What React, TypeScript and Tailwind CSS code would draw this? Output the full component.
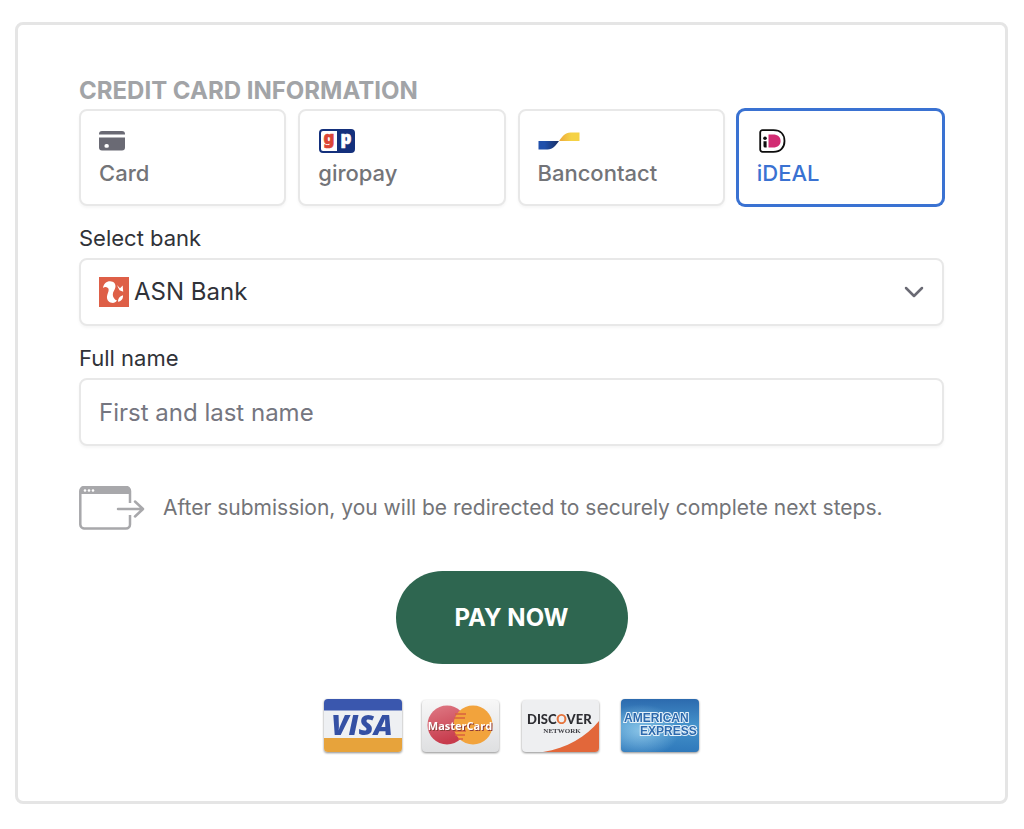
import { useState } from 'react';
import type { ReactNode } from 'react';
import { clsx } from 'clsx';

function CardIcon() {
  return (
    <svg viewBox="0 0 26 20" className="h-5 w-[26px]" fill="#6a6a74" aria-hidden="true">
      <path d="M3 0H23A3 3 0 0 1 26 3V3.500H0V3A3 3 0 0 1 3 0Z" />
      <path
        fillRule="evenodd"
        d="M0 6.500H26V16.500A3 3 0 0 1 23 19.500H3A3 3 0 0 1 0 16.500ZM7.300 13A1.900 1.900 0 0 0 7.300 16.800H8A1.900 1.900 0 0 0 8 13Z"
      />
    </svg>
  );
}

function GiropayIcon() {
  return (
    <svg viewBox="0 0 36 24" className="ml-px h-6 w-9 overflow-visible" aria-hidden="true">
      <rect width="36" height="24" rx="4" fill="#14307c" />
      <path d="M4 2H18V22H4A2 2 0 0 1 2 20V4A2 2 0 0 1 4 2Z" fill="#fff" />
      <g fontFamily="Noto Sans, sans-serif" fontWeight="900" fontSize="17" textAnchor="middle">
        <text x="10" y="15" fill="#dc4535" stroke="#dc4535" strokeWidth="0.600">
          g
        </text>
        <text x="27" y="15" fill="#fff" stroke="#fff" strokeWidth="0.600">
          p
        </text>
      </g>
    </svg>
  );
}

function BancontactIcon() {
  return (
    <svg viewBox="0 0 42 18" className="h-[18px] w-[42px]" aria-hidden="true">
      <defs>
        <linearGradient id="bc-blue" x1="0" x2="1">
          <stop offset="0.3" stopColor="#2050ab" />
          <stop offset="1" stopColor="#1a2f63" />
        </linearGradient>
        <linearGradient id="bc-yellow" x1="0" x2="1">
          <stop offset="0" stopColor="#eda93b" />
          <stop offset="0.6" stopColor="#f5d245" />
        </linearGradient>
      </defs>
      <path d="M0.500 9H21C17.500 13.500 15 17.500 9.500 17.500H0.500Z" fill="url(#bc-blue)" />
      <path d="M21 9C24.500 4.500 27 0.500 32.500 0.500H41.500V9Z" fill="url(#bc-yellow)" />
    </svg>
  );
}

function IdealIcon() {
  return (
    <svg viewBox="0 0 28 24" className="ml-0.5 h-6 w-7" aria-hidden="true">
      <path
        d="M3.500 1.200H14.500C21.500 1.200 25.500 5.500 25.500 12S21.500 22.800 14.500 22.800H3.500A2.300 2.300 0 0 1 1.200 20.500V3.500A2.300 2.300 0 0 1 3.500 1.200Z"
        fill="#fff"
        stroke="#0d0d0d"
        strokeWidth="1.800"
      />
      <path d="M9.500 5.500H14C18.800 5.500 21.600 8 21.600 12S18.800 18.500 14 18.500H9.500Z" fill="#d22c73" />
      <circle cx="6" cy="9.300" r="1.800" fill="#0d0d0d" />
      <path d="M4.500 12.300H7.600V18.500H6A1.500 1.500 0 0 1 4.500 17Z" fill="#0d0d0d" />
    </svg>
  );
}

function AsnLogo() {
  return (
    <svg viewBox="0 0 30 30" className="h-[30px] w-[30px]" aria-hidden="true">
      <rect width="30" height="30" fill="#de5f47" />
      <path
        d="M4 11C4.500 6.800 7.500 4.200 11 4.200C15 4.200 17 7 16.400 10.300C15.900 13 13.600 15 13.800 18C14 20.600 15.600 22.500 18 23.600C16.800 25.400 14.800 26.200 12.600 25.800C9.300 25.200 7.600 22.600 8 19.300C8.300 16.500 10 14.500 9.600 12.200C9.200 10 6 9 4 11Z"
        fill="#fff"
      />
      <path d="M18 8L21 11.200L23.700 8.600L24.200 14.800L20.500 13.200Z" fill="#fff" />
      <path d="M24 18.200C24.300 21.500 22.500 24.200 19 24.800C18.700 21.800 20.500 19.200 24 18.200Z" fill="#fff" />
    </svg>
  );
}

function RedirectIcon() {
  return (
    <svg viewBox="0 0 66 44" className="h-11 w-[66px] shrink-0" fill="none" aria-hidden="true">
      <path d="M51 17V5A4 4 0 0 0 47 1H5A4 4 0 0 0 1.300 5V38.500A4 4 0 0 0 5 42.500H47A4 4 0 0 0 51 38.500V29" stroke="#a8a8ab" strokeWidth="2.500" />
      <path d="M1 8V5A4 4 0 0 1 5 1H47A4 4 0 0 1 51 5V8Z" fill="#a8a8ab" />
      <g fill="#fff">
        <circle cx="6" cy="4.500" r="1.300" />
        <circle cx="10" cy="4.500" r="1.300" />
        <circle cx="14" cy="4.500" r="1.300" />
      </g>
      <path d="M39 23H63M56 15.500L64 23L56 30.500" stroke="#a8a8ab" strokeWidth="2.500" strokeLinecap="round" strokeLinejoin="round" />
    </svg>
  );
}

function CardBadge({ label, children }: { label: string; children: ReactNode }) {
  return (
    <svg viewBox="0 0 80 54" className="h-[54px] w-20 drop-shadow-[0_1px_1px_rgba(0,0,0,0.45)]" role="img" aria-label={label}>
      {children}
    </svg>
  );
}

function VisaBadge() {
  return (
    <CardBadge label="Visa">
      <rect x="1" width="78" height="53" rx="4" fill="#eef0f3" />
      <path d="M1 11.500V4A4 4 0 0 1 5 0H75A4 4 0 0 1 79 4V11.500Z" fill="#3a57ae" />
      <path d="M1 39H79V49A4 4 0 0 1 75 53H5A4 4 0 0 1 1 49Z" fill="#e7a33b" />
      <text x="39" y="36" textAnchor="middle" fontFamily="Open Sans, sans-serif" fontStyle="italic" fontWeight="800" fontSize="28" fill="#3450a4">
        VISA
      </text>
    </CardBadge>
  );
}

function MastercardBadge() {
  return (
    <CardBadge label="MasterCard">
      <defs>
        <linearGradient id="mc-base" x1="0" y1="0" x2="0" y2="1">
          <stop offset="0" stopColor="#f7f7f7" />
          <stop offset="1" stopColor="#dedfe1" />
        </linearGradient>
        <linearGradient id="mc-red" x1="0" y1="0" x2="0.3" y2="1">
          <stop offset="0" stopColor="#df7a85" />
          <stop offset="1" stopColor="#c73b4c" />
        </linearGradient>
      </defs>
      <rect x="0" y="1" width="77" height="52" rx="4" fill="url(#mc-base)" />
      <circle cx="25" cy="26" r="19.500" fill="url(#mc-red)" />
      <circle cx="51" cy="26" r="19.500" fill="#f2a33c" />
      <path d="M33 15H44M32 19H43M32 32H44M33 36H43M36 40H41" stroke="#d9623f" strokeWidth="1.500" />
      <text x="39" y="32" textAnchor="middle" fontFamily="Open Sans, sans-serif" fontWeight="700" fontSize="11" fill="#8d3a38">
        MasterCard
      </text>
      <text x="38" y="31" textAnchor="middle" fontFamily="Open Sans, sans-serif" fontWeight="700" fontSize="11" fill="#fff">
        MasterCard
      </text>
    </CardBadge>
  );
}

function DiscoverBadge() {
  return (
    <CardBadge label="Discover Network">
      <rect x="1" y="1" width="77" height="52" rx="4" fill="#eeeff1" />
      <path d="M22 53C46 49 65 38 78 22V49A4 4 0 0 1 74 53Z" fill="#e2673a" />
      <text x="6" y="25" fontFamily="Lato, sans-serif" fontWeight="900" fontSize="13" fill="#2e2e33">
        DISC
        <tspan fill="#e6733c">O</tspan>
        VER
      </text>
      <text x="41" y="34" textAnchor="middle" fontFamily="Liberation Serif, serif" fontWeight="700" fontSize="7" fill="#3c3c42">
        NETWORK
      </text>
    </CardBadge>
  );
}

function AmexBadge() {
  return (
    <CardBadge label="American Express">
      <defs>
        <linearGradient id="amex" x1="0" y1="0" x2="0" y2="1">
          <stop offset="0" stopColor="#2c6aae" />
          <stop offset="0.5" stopColor="#4593cb" />
          <stop offset="1" stopColor="#2f79bb" />
        </linearGradient>
        <radialGradient id="amex-glow" cx="0.25" cy="0.6" r="0.5">
          <stop offset="0" stopColor="#a5d8f3" stopOpacity="0.7" />
          <stop offset="1" stopColor="#a5d8f3" stopOpacity="0" />
        </radialGradient>
      </defs>
      <rect x="1" y="0" width="78" height="53" rx="4" fill="url(#amex)" />
      <rect x="1" y="0" width="78" height="53" rx="4" fill="url(#amex-glow)" />
      <g fontFamily="Liberation Sans, sans-serif" fontWeight="700" fontSize="12" fill="#2c69ad" stroke="#e4f1fa" strokeWidth="2" paintOrder="stroke">
        <text x="4" y="23">AMERICAN</text>
        <text x="20" y="36">EXPRESS</text>
      </g>
    </CardBadge>
  );
}

const methods = [
  { id: 'card', label: 'Card', icon: CardIcon },
  { id: 'giropay', label: 'giropay', icon: GiropayIcon },
  { id: 'bancontact', label: 'Bancontact', icon: BancontactIcon },
  { id: 'ideal', label: 'iDEAL', icon: IdealIcon },
];

const labelClass = 'mt-4 mb-1 block text-[22px] leading-8';

const fieldClass =
  'h-[68px] w-full rounded-lg border-2 border-[#e8e8e8] bg-white text-2xl shadow-[0_2px_3px_rgba(0,0,0,0.04)] outline-none focus:border-[#3a72d2]';

export default function App() {
  const [method, setMethod] = useState('ideal');
  const [bank, setBank] = useState('ASN Bank');
  const [name, setName] = useState('');

  return (
    <main className="bg-white pt-[22px] pr-4 pb-6 pl-[15px] font-[Inter,sans-serif] text-[#303238]">
      <form
        className="rounded-lg border-3 border-[#e5e5e5] px-[61px] pt-12 pb-12"
        onSubmit={(e) => e.preventDefault()}
      >
        <h1 className="text-2xl leading-9 font-bold text-[#a2a4a7]">CREDIT CARD INFORMATION</h1>

        {/* Payment methods */}
        <div className="grid grid-cols-4 gap-3">
          {methods.map(({ id, label, icon: Icon }) => (
            <button
              key={id}
              type="button"
              aria-pressed={method === id}
              onClick={() => setMethod(id)}
              className={clsx(
                'flex h-[97px] flex-col items-start rounded-lg border-2 bg-white px-[18px] pt-[18px] text-[22px] font-medium',
                method === id
                  ? 'border-[#3a72d2] text-[#3a72d2] ring-1 ring-[#3a72d2]'
                  : 'border-[#e8e8e8] text-[#737478] shadow-[0_2px_3px_rgba(0,0,0,0.04)]'
              )}
            >
              <span className="flex h-6 items-center">
                <Icon />
              </span>
              <span className="mt-1 leading-8">{label}</span>
            </button>
          ))}
        </div>

        {/* Bank */}
        <label htmlFor="bank" className={labelClass}>
          Select bank
        </label>
        <div className="relative">
          <select
            id="bank"
            value={bank}
            onChange={(e) => setBank(e.target.value)}
            className={clsx(fieldClass, 'block appearance-none pr-14 pl-[53px]')}
          >
            <option>ASN Bank</option>
          </select>
          <span className="pointer-events-none absolute inset-y-0 left-5 flex items-center">
            <AsnLogo />
          </span>
          <span className="pointer-events-none absolute inset-y-0 right-5 flex items-center">
            <svg viewBox="0 0 20 12" className="h-3 w-5" fill="none" aria-hidden="true">
              <path d="M2 2L10 10L18 2" stroke="#6a6a74" strokeWidth="2.500" strokeLinecap="round" strokeLinejoin="round" />
            </svg>
          </span>
        </div>

        {/* Name */}
        <label htmlFor="name" className={labelClass}>
          Full name
        </label>
        <input
          id="name"
          type="text"
          value={name}
          onChange={(e) => setName(e.target.value)}
          placeholder="First and last name"
          className={clsx(fieldClass, 'block px-[18px] placeholder:text-[#757680]')}
        />

        <div className="mt-10 flex items-center gap-[18px]">
          <RedirectIcon />
          <p className="text-[21px] leading-9 text-[#737478]">
            After submission, you will be redirected to securely complete next steps.
          </p>
        </div>

        <button
          type="submit"
          className="mx-auto mt-[41px] block h-[93px] w-[232px] rounded-full bg-[#2e6650] text-2xl font-bold text-white"
        >
          PAY NOW
        </button>

        <div className="mt-[35px] flex justify-center gap-[19px]">
          <VisaBadge />
          <MastercardBadge />
          <DiscoverBadge />
          <AmexBadge />
        </div>
      </form>
    </main>
  );
}
